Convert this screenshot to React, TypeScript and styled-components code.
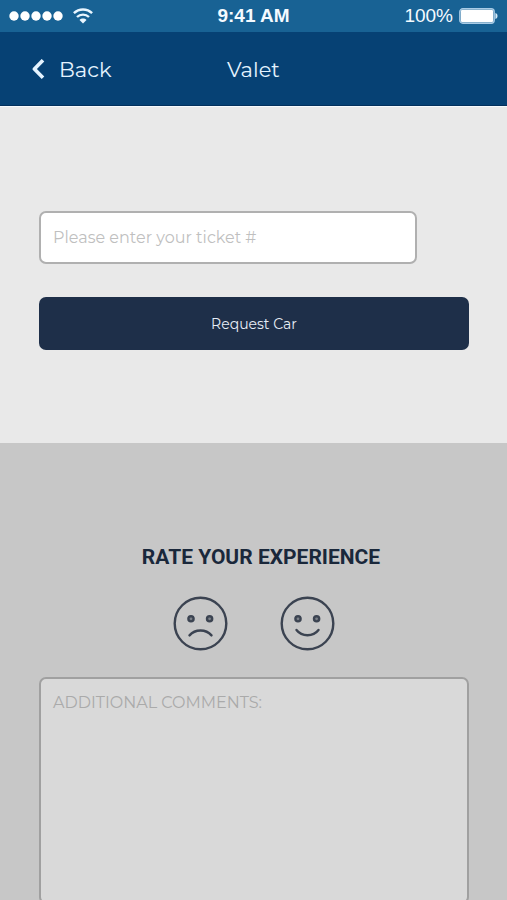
import React, { useState } from "react";
import styled, { createGlobalStyle } from "styled-components";

const GlobalStyle = createGlobalStyle`
  *, *::before, *::after { box-sizing: border-box; }
  body { margin: 0; background: #c7c7c7; }
  button, input, textarea { font-family: inherit; }
`;

const Screen = styled.div`
  display: flex;
  flex-direction: column;
  min-height: 100vh;
  font-family: Montserrat, Inter, sans-serif;
`;

const StatusBar = styled.div`
  display: grid;
  grid-template-columns: 1fr auto 1fr;
  align-items: center;
  height: 32px;
  padding: 0 9px;
  background: #186294;
  color: #f4faff;
  font-family: "Liberation Sans", Arial, sans-serif;
  font-size: 19px;
  line-height: 32px;
`;

const StatusGroup = styled.div<{ $end?: boolean }>`
  display: flex;
  align-items: center;
  justify-content: ${(p) => (p.$end ? "flex-end" : "flex-start")};
  gap: ${(p) => (p.$end ? "6px" : "10px")};
`;

const Clock = styled.time`
  font-weight: 700;
`;

const NavBar = styled.header`
  display: grid;
  grid-template-columns: 1fr auto 1fr;
  align-items: center;
  height: 74px;
  padding: 2px 32px 0;
  background: #064174;
  border-bottom: 1px solid #03305c;
  color: #e4f3ff;
`;

const BackButton = styled.button`
  display: flex;
  align-items: center;
  justify-self: start;
  gap: 14px;
  padding: 0;
  border: 0;
  background: none;
  color: inherit;
  font-size: 21px;
  line-height: 28px;
  cursor: pointer;
`;

const Title = styled.h1`
  margin: 0;
  font-size: 21px;
  font-weight: 400;
  line-height: 28px;
`;

const RequestForm = styled.form`
  display: flex;
  flex-direction: column;
  gap: 33px;
  padding: 104px 38px 93px 39px;
  background: #e9e9e9;
  border-top: 1px solid #f6fafd;
`;

const TicketInput = styled.input`
  width: 88%;
  height: 53px;
  padding: 0 12px;
  border: 2px solid #b0b0b0;
  border-radius: 7px;
  background: #fff;
  color: #1e2f49;
  font-size: 16px;
  &::placeholder { color: #bfbfbf; opacity: 1; }
`;

const RequestButton = styled.button`
  height: 53px;
  border: 0;
  border-radius: 7px;
  background: #1e2f49;
  color: #e6edf6;
  font-size: 14px;
  cursor: pointer;
`;

const Feedback = styled.section`
  display: flex;
  flex: 1;
  flex-direction: column;
  padding: 100px 38px 0 39px;
  background: #c7c7c7;
  overflow: hidden;
`;

const FeedbackTitle = styled.h2`
  margin: 0;
  padding-left: 14px;
  color: #1a283b;
  font-family: Roboto, sans-serif;
  font-size: 21px;
  font-weight: 700;
  line-height: 28px;
  text-align: center;
`;

const Faces = styled.div`
  display: flex;
  justify-content: center;
  gap: 52px;
  margin: 25px 0 26px;
`;

const FaceButton = styled.button`
  display: flex;
  padding: 0;
  border: 0;
  border-radius: 50%;
  background: none;
  color: #3b4351;
  cursor: pointer;
`;

const Comments = styled.textarea`
  display: block;
  flex: 1;
  min-height: 160px;
  margin-bottom: -4px;
  padding: 12px;
  border: 2px solid #a0a0a0;
  border-radius: 7px;
  background: #d9d9d9;
  color: #1e2f49;
  font-size: 16px;
  line-height: 24px;
  resize: none;
  &::placeholder { color: #aaa; opacity: 1; }
`;

const SignalDots = () => (
  <svg width="54" height="10" viewBox="0 0 54 10" fill="#fff" aria-label="Signal strength">
    {[5, 16, 27, 38, 49].map((x) => (
      <circle key={x} cx={x} cy="5" r="4.7" />
    ))}
  </svg>
);

const WifiIcon = () => (
  <svg width="20" height="16" viewBox="0 0 20 16" fill="none" stroke="#e9f6ff" strokeWidth="2.4" aria-label="Wi-Fi">
    <path d="M.9 5.2C6 .2 14 .2 19.1 5.2" />
    <path d="M4 9c3.3-3.2 8.7-3.2 12 0" />
    <path d="M6.5 12c1.9-1.9 5.1-1.9 7 0L10 15.6z" fill="#e9f6ff" stroke="none" />
  </svg>
);

const BatteryIcon = () => (
  <svg width="39" height="16" viewBox="0 0 39 16" aria-label="Battery full">
    <rect x=".8" y=".8" width="34.4" height="14.4" rx="3" fill="none" stroke="#a9cce6" strokeWidth="1.4" />
    <rect x="1.8" y="1.8" width="32.4" height="12.4" rx="1.6" fill="#fff" />
    <path d="M36.4 5c2.8.6 2.8 5.4 0 6z" fill="#d5eaf8" />
  </svg>
);

const ChevronIcon = () => (
  <svg
    width="13"
    height="22"
    viewBox="0 0 13 22"
    fill="none"
    stroke="currentColor"
    strokeWidth="3.6"
    strokeLinejoin="round"
    aria-hidden="true"
  >
    <path d="M11 1.2 2.4 10l8.6 8.8" />
  </svg>
);

const Face = ({ happy }: { happy?: boolean }) => (
  <svg
    width="55"
    height="55"
    viewBox="0 0 55 55"
    fill="none"
    stroke="currentColor"
    strokeWidth="2.4"
    strokeLinecap="round"
    aria-hidden="true"
  >
    <circle cx="27.5" cy="27.5" r="25.8" />
    <circle cx="18" cy="22.8" r="2.6" fill="#7b8088" />
    <circle cx="36.6" cy="22.8" r="2.6" fill="#7b8088" />
    <path d={happy ? "M16.5 34c5.4 7 16.6 7 22 0" : "M16.5 39.4c5.6-6.6 16.4-6.6 22 0"} />
  </svg>
);

export default function App() {
  const [ticket, setTicket] = useState("");
  const [comments, setComments] = useState("");

  return (
    <Screen>
      <GlobalStyle />
      <StatusBar>
        <StatusGroup>
          <SignalDots />
          <WifiIcon />
        </StatusGroup>
        <Clock>9:41 AM</Clock>
        <StatusGroup $end>
          <span>100%</span>
          <BatteryIcon />
        </StatusGroup>
      </StatusBar>
      <NavBar>
        <BackButton type="button">
          <ChevronIcon />
          Back
        </BackButton>
        <Title>Valet</Title>
      </NavBar>
      <RequestForm onSubmit={(e) => e.preventDefault()}>
        <TicketInput
          aria-label="Ticket number"
          placeholder="Please enter your ticket #"
          value={ticket}
          onChange={(e) => setTicket(e.target.value)}
        />
        <RequestButton type="submit">Request Car</RequestButton>
      </RequestForm>
      <Feedback>
        <FeedbackTitle>RATE YOUR EXPERIENCE</FeedbackTitle>
        <Faces>
          <FaceButton type="button" aria-label="Unhappy">
            <Face />
          </FaceButton>
          <FaceButton type="button" aria-label="Happy">
            <Face happy />
          </FaceButton>
        </Faces>
        <Comments
          aria-label="Additional comments"
          placeholder="ADDITIONAL COMMENTS:"
          value={comments}
          onChange={(e) => setComments(e.target.value)}
        />
      </Feedback>
    </Screen>
  );
}
